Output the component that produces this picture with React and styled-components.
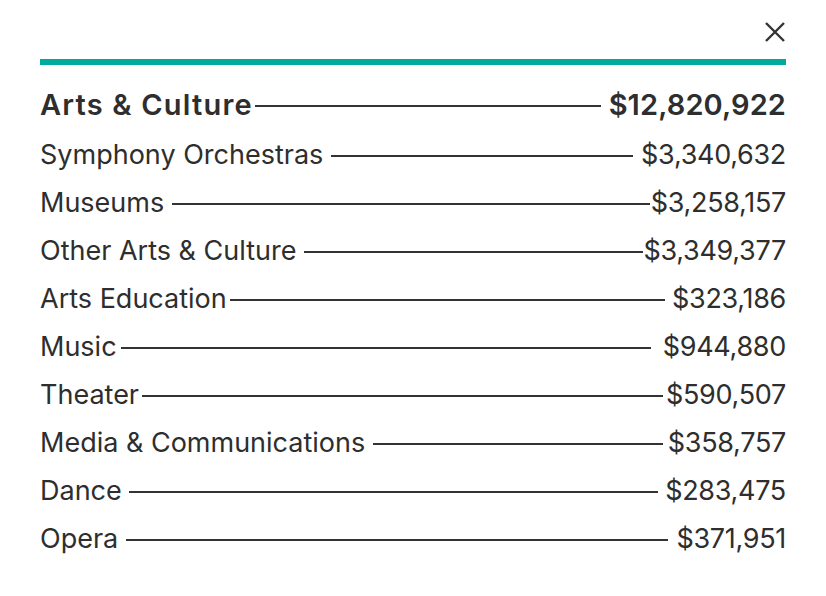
import React from "react";
import styled, { createGlobalStyle } from "styled-components";

const GlobalStyle = createGlobalStyle`
  html, body {
    margin: 0;
    padding: 0;
    background: #ffffff;
  }
  body {
    font-family: Inter, "Noto Sans", "Liberation Sans", sans-serif;
    color: #2e2e2e;
  }
`;

const rows = [
  { label: "Symphony Orchestras", value: "$3,340,632", gl: 8, gr: 8 },
  { label: "Museums", value: "$3,258,157", gl: 8, gr: 1 },
  { label: "Other Arts & Culture", value: "$3,349,377", gl: 8, gr: 1 },
  { label: "Arts Education", value: "$323,186", gl: 3, gr: 7 },
  { label: "Music", value: "$944,880", gl: 4, gr: 12 },
  { label: "Theater", value: "$590,507", gl: 3, gr: 3 },
  { label: "Media & Communications", value: "$358,757", gl: 8, gr: 5 },
  { label: "Dance", value: "$283,475", gl: 7, gr: 7 },
  { label: "Opera", value: "$371,951", gl: 8, gr: 8 },
];

function App() {
  return (
    <Panel>
      <GlobalStyle />
      <TopBar>
        <CloseButton aria-label="Close">
          <svg width="22" height="22" viewBox="0 0 22 22">
            <path d="M2 2 L20 20 M20 2 L2 20" stroke="#333" strokeWidth="2.4" strokeLinecap="butt" />
          </svg>
        </CloseButton>
      </TopBar>
      <Accent />
      <List>
        <Row $head>
          <Label $head>Arts &amp; Culture</Label>
          <Leader $gl={2} $gr={8} />
          <Value $head>$12,820,922</Value>
        </Row>
        {rows.map((r) => (
          <Row key={r.label}>
            <Label>{r.label}</Label>
            <Leader $gl={r.gl} $gr={r.gr} />
            <Value>{r.value}</Value>
          </Row>
        ))}
      </List>
    </Panel>
  );
}

const Panel = styled.div`
  width: 746px;
  padding: 20px 40px 0 40px;
`;

const TopBar = styled.div`
  display: flex;
  justify-content: flex-end;
  height: 24px;
`;

const CloseButton = styled.button`
  border: 0;
  background: none;
  padding: 0;
  margin-right: -1px;
  width: 24px;
  height: 24px;
  display: flex;
  align-items: center;
  justify-content: center;
  cursor: pointer;
`;

const Accent = styled.div`
  margin-top: 15px;
  height: 6px;
  background: #00ab9e;
`;

const List = styled.div`
  display: flex;
  flex-direction: column;
  margin-top: 24px;
`;

const Row = styled.div`
  display: flex;
  align-items: center;
  height: ${(p) => (p.$head ? "51px" : "48px")};
  margin-top: ${(p) => (p.$head ? "-10px" : "0")};
`;

const Label = styled.span`
  font-size: ${(p) => (p.$head ? "29px" : "27px")};
  font-weight: ${(p) => (p.$head ? 600 : 400)};
  letter-spacing: ${(p) => (p.$head ? "1.2px" : "0")};
  white-space: nowrap;
`;

const Value = styled.span`
  font-size: ${(p) => (p.$head ? "29px" : "27px")};
  font-weight: ${(p) => (p.$head ? 600 : 400)};
  letter-spacing: ${(p) => (p.$head ? "0.1px" : "-0.3px")};
  white-space: nowrap;
`;

const Leader = styled.span`
  flex: 1;
  height: 2px;
  background: #333;
  margin: 3px ${(p) => p.$gr}px 0 ${(p) => p.$gl}px;
`;

export default App;
